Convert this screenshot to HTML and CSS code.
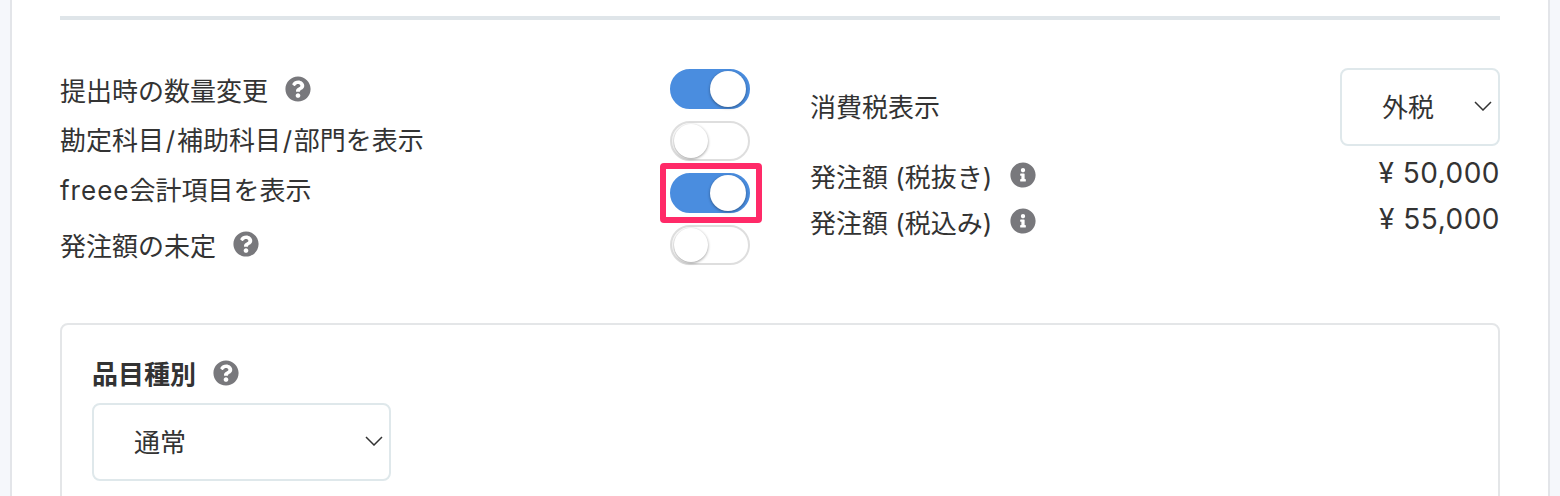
FILE: index.html
```html
<!DOCTYPE html>
<html lang="ja">
<head>
  <meta charset="UTF-8">
  <title>発注書設定</title>
  <link rel="stylesheet" href="styles.css">
</head>
<body>
  <svg class="icon-defs" width="0" height="0">
    <symbol id="icon-question" viewBox="0 0 512 512">
      <path d="M504 256c0 136.997-111.043 248-248 248S8 392.997 8 256C8 119.083 119.043 8 256 8s248 111.083 248 248zM262.655 90c-54.497 0-89.255 22.957-116.549 63.758-3.536 5.286-2.353 12.415 2.715 16.258l34.699 26.31c5.205 3.947 12.621 3.008 16.665-2.122 17.864-22.658 30.113-35.797 57.303-35.797 20.429 0 45.698 13.148 45.698 32.958 0 14.976-12.363 22.667-32.534 33.976C247.128 238.528 216 254.941 216 296v4c0 6.627 5.373 12 12 12h56c6.627 0 12-5.373 12-12v-1.333c0-28.462 83.186-29.647 83.186-106.667 0-58.002-60.165-102-116.531-102zM256 338c-25.365 0-46 20.635-46 46 0 25.364 20.635 46 46 46s46-20.636 46-46c0-25.365-20.635-46-46-46z"/>
    </symbol>
    <symbol id="icon-info" viewBox="0 0 512 512">
      <path d="M256 8C119.043 8 8 119.083 8 256c0 136.997 111.043 248 248 248s248-111.003 248-248C504 119.083 392.957 8 256 8zm0 110c23.196 0 42 18.804 42 42s-18.804 42-42 42-42-18.804-42-42 18.804-42 42-42zm56 254c0 6.627-5.373 12-12 12h-88c-6.627 0-12-5.373-12-12v-24c0-6.627 5.373-12 12-12h12v-64h-12c-6.627 0-12-5.373-12-12v-24c0-6.627 5.373-12 12-12h64c6.627 0 12 5.373 12 12v100h12c6.627 0 12 5.373 12 12v24z"/>
    </symbol>
    <symbol id="icon-chevron" viewBox="0 0 18 10">
      <path d="M1 1l8 8 8-8" fill="none" stroke="currentColor" stroke-width="1.5"/>
    </symbol>
  </svg>

  <div class="panel">
    <hr class="rule">

    <div class="settings">
      <!-- Left side: switches -->
      <div class="switch-labels">
        <div class="label-row"><span>提出時の数量変更</span><svg class="icon"><use href="#icon-question"/></svg></div>
        <div class="label-row"><span>勘定科目<span class="slash">/</span>補助科目<span class="slash">/</span>部門を表示</span></div>
        <div class="label-row"><span><span class="latin">freee</span>会計項目を表示</span></div>
        <div class="label-row last"><span>発注額の未定</span><svg class="icon"><use href="#icon-question"/></svg></div>
      </div>
      <div class="switches">
        <span class="switch on"><span class="knob"></span></span>
        <span class="switch"><span class="knob"></span></span>
        <span class="switch on marked"><span class="knob"></span></span>
        <span class="switch"><span class="knob"></span></span>
      </div>

      <!-- Right side: tax and amounts -->
      <div class="tax">
        <div class="tax-row">
          <span class="tax-label">消費税表示</span>
          <div class="select select-tax"><span>外税</span><svg class="chevron"><use href="#icon-chevron"/></svg></div>
        </div>
        <div class="amount-row first">
          <span class="amount-label"><span>発注額 (税抜き)</span><svg class="icon"><use href="#icon-info"/></svg></span>
          <span class="amount">¥ 50,000</span>
        </div>
        <div class="amount-row">
          <span class="amount-label"><span>発注額 (税込み)</span><svg class="icon"><use href="#icon-info"/></svg></span>
          <span class="amount">¥ 55,000</span>
        </div>
      </div>
    </div>

    <div class="box">
      <div class="box-title"><span>品目種別</span><svg class="icon"><use href="#icon-question"/></svg></div>
      <div class="select select-type"><span>通常</span><svg class="chevron"><use href="#icon-chevron"/></svg></div>
    </div>
  </div>
</body>
</html>
```

FILE: styles.css
```css
html, body {
  height: 100%;
}
body {
  margin: 0;
  overflow: hidden;
  background-color: #f5f7fb;
  color: #333;
  font-family: Inter, "Noto Sans CJK JP", sans-serif;
  font-size: 26px;
}
.icon-defs {
  display: block;
  height: 0;
}
.panel {
  margin: 0 10px;
  padding: 16px 48px 0;
  height: 480px;
  overflow: hidden;
  background-color: #fff;
  border: solid #e3e5e9;
  border-width: 0 2px;
}
.rule {
  margin: 0;
  border: none;
  height: 4px;
  background-color: #dfe5e9;
}
.settings {
  display: flex;
  margin-top: 45px;
}
.switch-labels {
  width: 610px;
}
.label-row {
  display: flex;
  align-items: center;
  height: 50px;
}
.label-row:first-child {
  height: 48px;
}
.label-row.last {
  margin-top: 6px;
}
.slash {
  padding: 0 1.75px;
}
.latin {
  letter-spacing: 1px;
}
.icon {
  width: 26px;
  height: 26px;
  margin-left: 17px;
  fill: #78787c;
  flex: none;
}
.switches {
  display: flex;
  flex-direction: column;
  gap: 12px;
  margin-top: 4px;
  width: 141px;
  margin-right: -1px;
}
.switch {
  display: flex;
  align-items: center;
  position: relative;
  box-sizing: border-box;
  width: 80px;
  height: 40px;
  padding: 0 2px;
  background-color: #fff;
  border: 2px solid #dedede;
  border-radius: 20px;
}
.switch.on {
  justify-content: flex-end;
  background-color: #4a8ddf;
  border-color: #4a8ddf;
}
.knob {
  box-sizing: border-box;
  width: 34px;
  height: 34px;
  background-color: #fff;
  border-radius: 50%;
  box-shadow: 0 1px 3px rgba(0, 0, 0, 0.4);
}
.switch.on .knob {
  width: 36px;
  height: 36px;
}
/* pink highlight drawn over the screenshot */
.switch.marked::after {
  content: "";
  position: absolute;
  left: -12px;
  top: -12px;
  width: 90px;
  height: 48px;
  border: 6px solid #ff2a68;
  border-radius: 4px;
}
.tax {
  flex: 1;
}
.tax-row {
  display: flex;
  align-items: center;
  justify-content: space-between;
  margin-top: 3px;
}
.tax-label {
  padding-bottom: 4px;
}
.select {
  display: flex;
  align-items: center;
  box-sizing: border-box;
  height: 78px;
  padding: 0 6px 3px 40px;
  background-color: #fff;
  border: 2px solid #dfe8eb;
  border-radius: 8px;
  justify-content: space-between;
}
.select-tax {
  width: 160px;
}
.select-type {
  width: 299px;
}
.chevron {
  width: 18px;
  height: 10px;
  color: #333;
}
.amount-row {
  display: flex;
  justify-content: space-between;
  height: 46px;
}
.amount-row.first {
  margin-top: 8px;
}
.amount-label {
  display: flex;
  align-items: center;
  height: 42px;
}
.amount-label .icon {
  margin-left: 18px;
}
.amount {
  height: 38px;
  line-height: 38px;
  font-size: 28px;
  letter-spacing: 0.5px;
}
.box {
  margin-top: 54px;
  padding: 27px 30px 0;
  height: 300px;
  border: 2px solid #e4e6e8;
  border-radius: 8px;
}
.box-title {
  display: flex;
  align-items: center;
  height: 41px;
  font-weight: bold;
}
.box-title + .select {
  margin-top: 10px;
}
```
